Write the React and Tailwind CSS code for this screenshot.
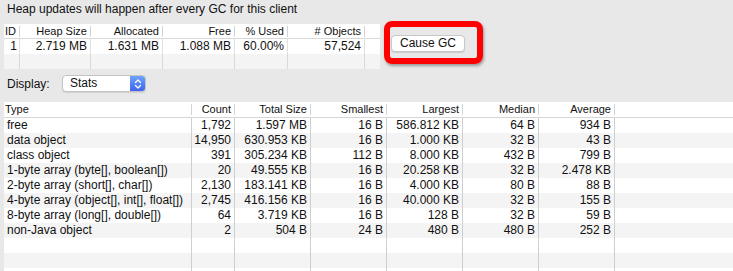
import React from 'react';

const heapCols = [
  { label: 'ID', w: 'w-[16px]', align: 'left' },
  { label: 'Heap Size', w: 'w-[71px]' },
  { label: 'Allocated', w: 'w-[72px]' },
  { label: 'Free', w: 'w-[72px]' },
  { label: '% Used', w: 'w-[53px]' },
  { label: '# Objects', w: 'w-[77px]' },
];

const heapRow = ['1', '2.719 MB', '1.631 MB', '1.088 MB', '60.00%', '57,524'];

const statCols = [
  { label: 'Type', w: 'w-[188px]', align: 'left' },
  { label: 'Count', w: 'w-[43px]' },
  { label: 'Total Size', w: 'w-[76px]' },
  { label: 'Smallest', w: 'w-[76px]' },
  { label: 'Largest', w: 'w-[76px]' },
  { label: 'Median', w: 'w-[76px]' },
  { label: 'Average', w: 'w-[76px]' },
];

const stats = [
  ['free', '1,792', '1.597 MB', '16 B', '586.812 KB', '64 B', '934 B'],
  ['data object', '14,950', '630.953 KB', '16 B', '1.000 KB', '32 B', '43 B'],
  ['class object', '391', '305.234 KB', '112 B', '8.000 KB', '432 B', '799 B'],
  ['1-byte array (byte[], boolean[])', '20', '49.555 KB', '16 B', '20.258 KB', '32 B', '2.478 KB'],
  ['2-byte array (short[], char[])', '2,130', '183.141 KB', '16 B', '4.000 KB', '80 B', '88 B'],
  ['4-byte array (object[], int[], float[])', '2,745', '416.156 KB', '16 B', '40.000 KB', '32 B', '155 B'],
  ['8-byte array (long[], double[])', '64', '3.719 KB', '16 B', '128 B', '32 B', '59 B'],
  ['non-Java object', '2', '504 B', '24 B', '480 B', '480 B', '252 B'],
];

function HeaderCell({ col, h }) {
  return (
    <div className={`${col.w} ${h} flex items-center shrink-0`}>
      <div className={`flex-1 whitespace-nowrap overflow-hidden ${col.align === 'left' ? 'text-left pl-[1px]' : 'text-right pr-[3px]'}`}>
        {col.label}
      </div>
      <div className="w-px h-[11px] bg-[#d4d4d4]" />
    </div>
  );
}

function BodyCell({ col, children, line }) {
  return (
    <div
      className={`${col.w} shrink-0 h-full border-r ${line} whitespace-nowrap overflow-hidden ${
        col.align === 'left' ? 'text-left pl-[3px]' : 'text-right pr-[3px]'
      }`}
    >
      {children}
    </div>
  );
}

function Chevrons() {
  return (
    <svg width="8" height="12" viewBox="0 0 8 12" fill="none">
      <path d="M1.5 4.5 L4 2 L6.5 4.5" stroke="white" strokeWidth="1.4" strokeLinecap="round" strokeLinejoin="round" />
      <path d="M1.5 7.5 L4 10 L6.5 7.5" stroke="white" strokeWidth="1.4" strokeLinecap="round" strokeLinejoin="round" />
    </svg>
  );
}

export default function App() {
  return (
    <div
      className="relative w-[733px] h-[271px] overflow-hidden bg-[#e8e8e8] text-[#111] text-[12px]"
      style={{ fontFamily: '"Liberation Sans", Arial, sans-serif' }}
    >
      {/* Title */}
      <div className="h-[24px] pl-[7px] leading-[19px]">Heap updates will happen after every GC for this client</div>

      {/* Heap table + button */}
      <div className="flex items-start">
        <div className="ml-[4px] w-[376px] bg-white">
          <div className="flex h-[15px] border-b border-[#d9d9d9] text-[11px]">
            {heapCols.map((c) => (
              <HeaderCell key={c.label} col={c} h="h-[14px]" />
            ))}
            <div className="flex-1" />
          </div>
          <div className="flex h-[15px] leading-[15px]">
            {heapCols.map((c, i) => (
              <BodyCell key={c.label} col={c} line="border-[#e0e0e0]">
                {c.align === 'left' ? <span className="block text-right pr-[2px]">{heapRow[i]}</span> : heapRow[i]}
              </BodyCell>
            ))}
            <div className="flex-1" />
          </div>
          <div className="flex h-[15px] bg-[#f4f4f4]">
            {heapCols.map((c) => (
              <BodyCell key={c.label} col={c} line="border-[#d9d9d9]" />
            ))}
            <div className="flex-1" />
          </div>
        </div>

        <button className="ml-[11px] mt-[11px] w-[74px] h-[17px] bg-white rounded-[4px] border border-[#c8c8c8] shadow-[0_1px_1px_rgba(0,0,0,0.12)] text-[12px] leading-[15px] text-[#111]">
          Cause GC
        </button>
      </div>

      {/* Display selector */}
      <div className="flex items-center h-[17px] mt-[6px]">
        <div className="pl-[7px] w-[62px]">Display:</div>
        <div className="flex w-[84px] h-[17px] rounded-[4px] bg-white border border-[#c4c4c4] shadow-[0_1px_1px_rgba(0,0,0,0.1)] overflow-hidden">
          <div className="flex-1 pl-[7px] leading-[15px]">Stats</div>
          <div className="w-[15px] h-full flex items-center justify-center bg-gradient-to-b from-[#6ea2fb] to-[#3f62f0]">
            <Chevrons />
          </div>
        </div>
      </div>

      {/* Stats table */}
      <div className="ml-[4px] mt-[10px] bg-white">
        <div className="flex h-[16px] border-b border-[#d6d6d6] text-[11px]">
          {statCols.map((c) => (
            <HeaderCell key={c.label} col={c} h="h-[15px]" />
          ))}
          <div className="flex-1" />
        </div>
        {stats.map((row, r) => (
          <div key={row[0]} className={`flex h-[15px] leading-[15px] ${r % 2 === 1 ? 'bg-[#f4f4f4]' : 'bg-white'}`}>
            {statCols.map((c, i) => (
              <BodyCell key={c.label} col={c} line="border-[#cfcfcf]">
                {row[i]}
              </BodyCell>
            ))}
            <div className="flex-1" />
          </div>
        ))}
        {[0, 1, 2].map((r) => (
          <div key={r} className={`flex h-[15px] ${r % 2 === 1 ? 'bg-[#f4f4f4]' : 'bg-white'}`}>
            {statCols.map((c) => (
              <BodyCell key={c.label} col={c} line="border-[#cfcfcf]" />
            ))}
            <div className="flex-1" />
          </div>
        ))}
      </div>

      {/* Annotation highlight */}
      <div className="absolute left-[384px] top-[21px] w-[99px] h-[43px] border-[6px] border-[#ff0000] rounded-[8px] shadow-[1px_2px_3px_rgba(0,0,0,0.35)]" />
    </div>
  );
}
